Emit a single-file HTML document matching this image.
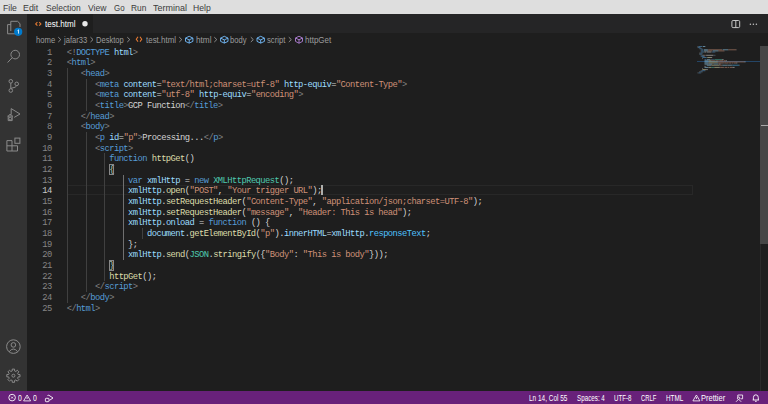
<!DOCTYPE html>
<html><head><meta charset="utf-8">
<style>
*{margin:0;padding:0;box-sizing:border-box}
html,body{width:768px;height:404px;overflow:hidden;background:#1e1e1e;font-family:"Liberation Sans",sans-serif}
.abs{position:absolute}
#menubar{position:absolute;left:0;top:0;width:768px;height:14px;background:#dedede;color:#3c3c3c;font-size:8.4px}
#menubar span{position:absolute;top:1.9px;line-height:10px}
#activity{position:absolute;left:0;top:14px;width:27px;height:377px;background:#333333}
#tabbar{position:absolute;left:27px;top:14px;width:741px;height:19px;background:#252526}
#tab{position:absolute;left:27px;top:14px;width:66px;height:19px;background:#1e1e1e}
#status{position:absolute;left:0;top:391px;width:768px;height:13px;background:#68217a;color:#fff;font-size:7.4px}
#status span{position:absolute;top:2px;line-height:9px}
.ui{position:absolute;white-space:pre;transform-origin:0 0;}
.crumbx{position:absolute;top:35px;line-height:10px;font-size:8px;color:#a9a9a9}
.ln{position:absolute;padding-top:0.9px;height:10.67px;line-height:10.67px;font-family:"Liberation Mono",monospace;font-size:8.8px;letter-spacing:-0.558px;white-space:pre;color:#d4d4d4}
.num{position:absolute;padding-top:0.9px;left:27px;width:24.8px;text-align:right;height:10.67px;line-height:10.67px;font-family:"Liberation Mono",monospace;font-size:8.8px;letter-spacing:-0.558px;color:#858585}
.num.act{color:#c6c6c6}
.g{color:#808080}.b{color:#569cd6}.a{color:#9cdcfe}.s{color:#ce9178}.t{color:#d4d4d4}.f{color:#dcdcaa}.c{color:#4ec9b0}.p{color:#4fc1ff}
.guide{position:absolute;width:1px;background:#404040}
.guide.act{background:#707070}
</style></head><body>
<div id="menubar"></div>
<div id="activity"></div>
<div id="tabbar"></div>
<div id="tab"></div>
<!-- tab content -->
<svg class="abs" style="left:0;top:0" width="768" height="404" viewBox="0 0 768 404">
<g fill="none" stroke="#e37933" stroke-width="1.1">
<path d="M37.4 22.1 L35.7 23.9 L37.4 25.7"/><path d="M39.2 22.1 L40.9 23.9 L39.2 25.7"/>
<path d="M138 36.8 L136.3 39.2 L138 41.6"/><path d="M140 36.8 L141.7 39.2 L140 41.6"/>
</g>
<circle cx="85" cy="23.8" r="2.7" fill="#e8e8e8"/>
<g fill="none" stroke="#9a9a9a" stroke-width="0.9">
<path d="M58.3 37.2 L60.8 39.6 L58.3 42"/>
<path d="M90.5 37.2 L93 39.6 L90.5 42"/>
<path d="M127.3 37.2 L129.8 39.6 L127.3 42"/>
<path d="M179.3 37.2 L181.8 39.6 L179.3 42"/>
<path d="M214.3 37.2 L216.8 39.6 L214.3 42"/>
<path d="M250.8 37.2 L253.3 39.6 L250.8 42"/>
<path d="M288.8 37.2 L291.3 39.6 L288.8 42"/>
</g>
<g fill="none" stroke="#75beff" stroke-width="0.9">
<g transform="translate(189.2 39.6)"><path d="M0 -3.3 L3.7 -1.5 L3.7 1.8 L0 3.5 L-3.7 1.8 L-3.7 -1.5 Z M-3.7 -1.5 L0 0.3 L3.7 -1.5 M0 0.3 L0 3.5"/></g>
<g transform="translate(224.3 39.6)"><path d="M0 -3.3 L3.7 -1.5 L3.7 1.8 L0 3.5 L-3.7 1.8 L-3.7 -1.5 Z M-3.7 -1.5 L0 0.3 L3.7 -1.5 M0 0.3 L0 3.5"/></g>
<g transform="translate(260.7 39.6)"><path d="M0 -3.3 L3.7 -1.5 L3.7 1.8 L0 3.5 L-3.7 1.8 L-3.7 -1.5 Z M-3.7 -1.5 L0 0.3 L3.7 -1.5 M0 0.3 L0 3.5"/></g>
</g>
<g fill="none" stroke="#b180d7" stroke-width="0.9">
<g transform="translate(299 39.6)"><path d="M0 -3.4 L3.5 -1.6 L3.5 1.8 L0 3.6 L-3.5 1.8 L-3.5 -1.6 Z M-3.5 -1.6 L0 0.2 L3.5 -1.6 M0 0.2 L0 3.6"/></g>
</g>
<!-- editor actions -->
<rect x="731.9" y="20.5" width="7.8" height="7.1" rx="1.2" fill="none" stroke="#c5c5c5" stroke-width="1"/>
<line x1="735.8" y1="20.5" x2="735.8" y2="27.6" stroke="#c5c5c5" stroke-width="1"/>
<circle cx="750.4" cy="24.2" r="0.75" fill="#c5c5c5"/><circle cx="753.4" cy="24.2" r="0.75" fill="#c5c5c5"/><circle cx="756.4" cy="24.2" r="0.75" fill="#c5c5c5"/>
<!-- activity icons -->
<g fill="none" stroke="#8a8a8a" stroke-width="1">
<path d="M10.8 24.6 H7.6 V33.8 H15"/>
<path d="M10.8 31 V21.3 H17.6 L20 23.7 V27"/>
<circle cx="15.2" cy="54.6" r="4.3"/>
<path d="M12.2 57.7 L7.6 62.5"/>
<circle cx="10.8" cy="81.3" r="1.8"/><circle cx="16.7" cy="83.9" r="1.8"/><circle cx="10.8" cy="90.5" r="1.8"/>
<path d="M10.8 83.1 V88.7 M16.7 85.7 Q16.5 87.4 10.8 88.4"/>
<path d="M11.2 114.6 V108.6 L20 114 L14.2 117.4"/>
<path d="M7.6 116 H12.8 M8.2 116 V120.6 H12.2 V116"/><circle cx="10.2" cy="118.6" r="1.4"/><path d="M8.6 115.6 L9.4 114.6 H11 L11.8 115.6"/>
<path d="M6.9 140.6 H12 V151 H6.9 Z M6.9 145.8 H17.5 V151 H12"/>
<rect x="14.9" y="138.1" width="5" height="5.2"/>
<circle cx="13.4" cy="346.6" r="6.8"/>
<circle cx="13.4" cy="344.9" r="2.3"/>
<path d="M9.1 351.8 Q13.4 346.2 17.7 351.8"/>
</g>
<g fill="none" stroke="#8a8a8a" stroke-width="1"><path d="M12.21 370.95 L12.24 369.10 L14.56 369.10 L14.59 370.95 L15.92 371.50 L17.24 370.21 L18.89 371.86 L17.60 373.18 L18.15 374.51 L20.00 374.54 L20.00 376.86 L18.15 376.89 L17.60 378.22 L18.89 379.54 L17.24 381.19 L15.92 379.90 L14.59 380.45 L14.56 382.30 L12.24 382.30 L12.21 380.45 L10.88 379.90 L9.56 381.19 L7.91 379.54 L9.20 378.22 L8.65 376.89 L6.80 376.86 L6.80 374.54 L8.65 374.51 L9.20 373.18 L7.91 371.86 L9.56 370.21 L10.88 371.50 Z"/><circle cx="13.4" cy="375.7" r="1.5"/></g>
<!-- badge -->
<circle cx="18.2" cy="31.8" r="4.1" fill="#007acc"/>
<path d="M17.5 30.6 L18.5 29.8 V33.6" stroke="#fff" stroke-width="0.8" fill="none"/>
</svg>
<!-- breadcrumbs -->
<!-- current line -->
<div class="abs" style="left:66.8px;top:184.7px;width:626px;height:10.66px;border:1px solid #282828"></div>
<div class="guide" style="left:66.70px;top:68.04px;height:234.74px"></div>
<div class="guide" style="left:85.59px;top:78.71px;height:32.01px"></div>
<div class="guide" style="left:85.59px;top:132.06px;height:160.05px"></div>
<div class="guide" style="left:104.48px;top:153.40px;height:128.04px"></div>
<div class="guide act" style="left:123.36px;top:174.74px;height:85.36px"></div>
<div class="guide" style="left:142.25px;top:228.09px;height:10.67px"></div>
<div class="num" style="top:46.70px">1</div>
<div class="num" style="top:57.37px">2</div>
<div class="num" style="top:68.04px">3</div>
<div class="num" style="top:78.71px">4</div>
<div class="num" style="top:89.38px">5</div>
<div class="num" style="top:100.05px">6</div>
<div class="num" style="top:110.72px">7</div>
<div class="num" style="top:121.39px">8</div>
<div class="num" style="top:132.06px">9</div>
<div class="num" style="top:142.73px">10</div>
<div class="num" style="top:153.40px">11</div>
<div class="num" style="top:164.07px">12</div>
<div class="num" style="top:174.74px">13</div>
<div class="num act" style="top:185.41px">14</div>
<div class="num" style="top:196.08px">15</div>
<div class="num" style="top:206.75px">16</div>
<div class="num" style="top:217.42px">17</div>
<div class="num" style="top:228.09px">18</div>
<div class="num" style="top:238.76px">19</div>
<div class="num" style="top:249.43px">20</div>
<div class="num" style="top:260.10px">21</div>
<div class="num" style="top:270.77px">22</div>
<div class="num" style="top:281.44px">23</div>
<div class="num" style="top:292.11px">24</div>
<div class="num" style="top:302.78px">25</div>
<div class="ln" style="top:46.70px;left:66.70px"><span class="g">&lt;!</span><span class="b">DOCTYPE</span><span class="t"> </span><span class="a">html</span><span class="g">&gt;</span></div>
<div class="ln" style="top:57.37px;left:66.70px"><span class="g">&lt;</span><span class="b">html</span><span class="g">&gt;</span></div>
<div class="ln" style="top:68.04px;left:80.87px"><span class="g">&lt;</span><span class="b">head</span><span class="g">&gt;</span></div>
<div class="ln" style="top:78.71px;left:95.03px"><span class="g">&lt;</span><span class="b">meta</span><span class="t"> </span><span class="a">content</span><span class="t">=</span><span class="s">"text/html;charset=utf-8"</span><span class="t"> </span><span class="a">http-equiv</span><span class="t">=</span><span class="s">"Content-Type"</span><span class="g">&gt;</span></div>
<div class="ln" style="top:89.38px;left:95.03px"><span class="g">&lt;</span><span class="b">meta</span><span class="t"> </span><span class="a">content</span><span class="t">=</span><span class="s">"utf-8"</span><span class="t"> </span><span class="a">http-equiv</span><span class="t">=</span><span class="s">"encoding"</span><span class="g">&gt;</span></div>
<div class="ln" style="top:100.05px;left:95.03px"><span class="g">&lt;</span><span class="b">title</span><span class="g">&gt;</span><span class="t">GCP Function</span><span class="g">&lt;/</span><span class="b">title</span><span class="g">&gt;</span></div>
<div class="ln" style="top:110.72px;left:80.87px"><span class="g">&lt;/</span><span class="b">head</span><span class="g">&gt;</span></div>
<div class="ln" style="top:121.39px;left:80.87px"><span class="g">&lt;</span><span class="b">body</span><span class="g">&gt;</span></div>
<div class="ln" style="top:132.06px;left:95.03px"><span class="g">&lt;</span><span class="b">p</span><span class="t"> </span><span class="a">id</span><span class="t">=</span><span class="s">"p"</span><span class="g">&gt;</span><span class="t">Processing...</span><span class="g">&lt;/</span><span class="b">p</span><span class="g">&gt;</span></div>
<div class="ln" style="top:142.73px;left:95.03px"><span class="g">&lt;</span><span class="b">script</span><span class="g">&gt;</span></div>
<div class="ln" style="top:153.40px;left:109.20px"><span class="b">function</span><span class="t"> </span><span class="f">httpGet</span><span class="t">()</span></div>
<div class="ln" style="top:164.07px;left:109.20px"><span class="t">{</span></div>
<div class="ln" style="top:174.74px;left:128.09px"><span class="b">var</span><span class="t"> </span><span class="a">xmlHttp</span><span class="t"> = </span><span class="b">new</span><span class="t"> </span><span class="c">XMLHttpRequest</span><span class="t">();</span></div>
<div class="ln" style="top:185.41px;left:128.09px"><span class="a">xmlHttp</span><span class="t">.</span><span class="f">open</span><span class="t">(</span><span class="s">"POST"</span><span class="t">, </span><span class="s">"Your trigger URL"</span><span class="t">);</span></div>
<div class="ln" style="top:196.08px;left:128.09px"><span class="a">xmlHttp</span><span class="t">.</span><span class="f">setRequestHeader</span><span class="t">(</span><span class="s">"Content-Type"</span><span class="t">, </span><span class="s">"application/json;charset=UTF-8"</span><span class="t">);</span></div>
<div class="ln" style="top:206.75px;left:128.09px"><span class="a">xmlHttp</span><span class="t">.</span><span class="f">setRequestHeader</span><span class="t">(</span><span class="s">"message"</span><span class="t">, </span><span class="s">"Header: This is head"</span><span class="t">);</span></div>
<div class="ln" style="top:217.42px;left:128.09px"><span class="a">xmlHttp</span><span class="t">.</span><span class="a">onload</span><span class="t"> = </span><span class="b">function</span><span class="t"> () {</span></div>
<div class="ln" style="top:228.09px;left:146.97px"><span class="a">document</span><span class="t">.</span><span class="f">getElementById</span><span class="t">(</span><span class="s">"p"</span><span class="t">).</span><span class="a">innerHTML</span><span class="t">=</span><span class="a">xmlHttp</span><span class="t">.</span><span class="p">responseText</span><span class="t">;</span></div>
<div class="ln" style="top:238.76px;left:128.09px"><span class="t">};</span></div>
<div class="ln" style="top:249.43px;left:128.09px"><span class="a">xmlHttp</span><span class="t">.</span><span class="f">send</span><span class="t">(</span><span class="c">JSON</span><span class="t">.</span><span class="f">stringify</span><span class="t">({</span><span class="s">"Body"</span><span class="t">: </span><span class="s">"This is body"</span><span class="t">}));</span></div>
<div class="ln" style="top:260.10px;left:109.20px"><span class="t">}</span></div>
<div class="ln" style="top:270.77px;left:109.20px"><span class="f">httpGet</span><span class="t">();</span></div>
<div class="ln" style="top:281.44px;left:95.03px"><span class="g">&lt;/</span><span class="b">script</span><span class="g">&gt;</span></div>
<div class="ln" style="top:292.11px;left:80.87px"><span class="g">&lt;/</span><span class="b">body</span><span class="g">&gt;</span></div>
<div class="ln" style="top:302.78px;left:66.70px"><span class="g">&lt;/</span><span class="b">html</span><span class="g">&gt;</span></div>
<!-- minimap -->
<div class="abs" style="left:697px;top:60.6px;width:63px;height:1.1px;background:#264f78;opacity:0.8"></div>
<svg class="abs" style="left:0;top:0;opacity:0.55" width="768" height="404"><rect x="697.40" y="46.00" width="1.09" height="1" fill="#808080"/><rect x="698.49" y="46.00" width="3.83" height="1" fill="#569cd6"/><rect x="702.87" y="46.00" width="2.19" height="1" fill="#9cdcfe"/><rect x="705.06" y="46.00" width="0.55" height="1" fill="#808080"/><rect x="697.40" y="47.10" width="0.55" height="1" fill="#808080"/><rect x="697.95" y="47.10" width="2.19" height="1" fill="#569cd6"/><rect x="700.13" y="47.10" width="0.55" height="1" fill="#808080"/><rect x="699.04" y="48.20" width="0.55" height="1" fill="#808080"/><rect x="699.59" y="48.20" width="2.19" height="1" fill="#569cd6"/><rect x="701.78" y="48.20" width="0.55" height="1" fill="#808080"/><rect x="700.68" y="49.30" width="0.55" height="1" fill="#808080"/><rect x="701.23" y="49.30" width="2.19" height="1" fill="#569cd6"/><rect x="703.96" y="49.30" width="3.83" height="1" fill="#9cdcfe"/><rect x="707.79" y="49.30" width="0.55" height="1" fill="#d4d4d4"/><rect x="708.34" y="49.30" width="13.68" height="1" fill="#ce9178"/><rect x="722.56" y="49.30" width="5.47" height="1" fill="#9cdcfe"/><rect x="728.03" y="49.30" width="0.55" height="1" fill="#d4d4d4"/><rect x="728.58" y="49.30" width="7.66" height="1" fill="#ce9178"/><rect x="736.24" y="49.30" width="0.55" height="1" fill="#808080"/><rect x="700.68" y="50.40" width="0.55" height="1" fill="#808080"/><rect x="701.23" y="50.40" width="2.19" height="1" fill="#569cd6"/><rect x="703.96" y="50.40" width="3.83" height="1" fill="#9cdcfe"/><rect x="707.79" y="50.40" width="0.55" height="1" fill="#d4d4d4"/><rect x="708.34" y="50.40" width="3.83" height="1" fill="#ce9178"/><rect x="712.72" y="50.40" width="5.47" height="1" fill="#9cdcfe"/><rect x="718.19" y="50.40" width="0.55" height="1" fill="#d4d4d4"/><rect x="718.73" y="50.40" width="5.47" height="1" fill="#ce9178"/><rect x="724.20" y="50.40" width="0.55" height="1" fill="#808080"/><rect x="700.68" y="51.50" width="0.55" height="1" fill="#808080"/><rect x="701.23" y="51.50" width="2.74" height="1" fill="#569cd6"/><rect x="703.96" y="51.50" width="0.55" height="1" fill="#808080"/><rect x="704.51" y="51.50" width="1.64" height="1" fill="#d4d4d4"/><rect x="706.70" y="51.50" width="4.38" height="1" fill="#d4d4d4"/><rect x="711.07" y="51.50" width="1.09" height="1" fill="#808080"/><rect x="712.17" y="51.50" width="2.74" height="1" fill="#569cd6"/><rect x="714.90" y="51.50" width="0.55" height="1" fill="#808080"/><rect x="699.04" y="52.60" width="1.09" height="1" fill="#808080"/><rect x="700.13" y="52.60" width="2.19" height="1" fill="#569cd6"/><rect x="702.32" y="52.60" width="0.55" height="1" fill="#808080"/><rect x="699.04" y="53.70" width="0.55" height="1" fill="#808080"/><rect x="699.59" y="53.70" width="2.19" height="1" fill="#569cd6"/><rect x="701.78" y="53.70" width="0.55" height="1" fill="#808080"/><rect x="700.68" y="54.80" width="0.55" height="1" fill="#808080"/><rect x="701.23" y="54.80" width="0.55" height="1" fill="#569cd6"/><rect x="702.32" y="54.80" width="1.09" height="1" fill="#9cdcfe"/><rect x="703.42" y="54.80" width="0.55" height="1" fill="#d4d4d4"/><rect x="703.96" y="54.80" width="1.64" height="1" fill="#ce9178"/><rect x="705.61" y="54.80" width="0.55" height="1" fill="#808080"/><rect x="706.15" y="54.80" width="7.11" height="1" fill="#d4d4d4"/><rect x="713.26" y="54.80" width="1.09" height="1" fill="#808080"/><rect x="714.36" y="54.80" width="0.55" height="1" fill="#569cd6"/><rect x="714.90" y="54.80" width="0.55" height="1" fill="#808080"/><rect x="700.68" y="55.90" width="0.55" height="1" fill="#808080"/><rect x="701.23" y="55.90" width="3.28" height="1" fill="#569cd6"/><rect x="704.51" y="55.90" width="0.55" height="1" fill="#808080"/><rect x="702.32" y="57.00" width="4.38" height="1" fill="#569cd6"/><rect x="707.25" y="57.00" width="3.83" height="1" fill="#dcdcaa"/><rect x="711.07" y="57.00" width="1.09" height="1" fill="#d4d4d4"/><rect x="702.32" y="58.10" width="0.55" height="1" fill="#d4d4d4"/><rect x="704.51" y="59.20" width="1.64" height="1" fill="#569cd6"/><rect x="706.70" y="59.20" width="3.83" height="1" fill="#9cdcfe"/><rect x="711.07" y="59.20" width="0.55" height="1" fill="#d4d4d4"/><rect x="712.17" y="59.20" width="1.64" height="1" fill="#569cd6"/><rect x="714.36" y="59.20" width="7.66" height="1" fill="#4ec9b0"/><rect x="722.01" y="59.20" width="1.64" height="1" fill="#d4d4d4"/><rect x="704.51" y="60.30" width="3.83" height="1" fill="#9cdcfe"/><rect x="708.34" y="60.30" width="0.55" height="1" fill="#d4d4d4"/><rect x="708.89" y="60.30" width="2.19" height="1" fill="#dcdcaa"/><rect x="711.07" y="60.30" width="0.55" height="1" fill="#d4d4d4"/><rect x="711.62" y="60.30" width="3.28" height="1" fill="#ce9178"/><rect x="714.90" y="60.30" width="0.55" height="1" fill="#d4d4d4"/><rect x="716.00" y="60.30" width="2.74" height="1" fill="#ce9178"/><rect x="719.28" y="60.30" width="3.83" height="1" fill="#ce9178"/><rect x="723.66" y="60.30" width="2.19" height="1" fill="#ce9178"/><rect x="725.84" y="60.30" width="1.09" height="1" fill="#d4d4d4"/><rect x="704.51" y="61.40" width="3.83" height="1" fill="#9cdcfe"/><rect x="708.34" y="61.40" width="0.55" height="1" fill="#d4d4d4"/><rect x="708.89" y="61.40" width="8.75" height="1" fill="#dcdcaa"/><rect x="717.64" y="61.40" width="0.55" height="1" fill="#d4d4d4"/><rect x="718.19" y="61.40" width="7.66" height="1" fill="#ce9178"/><rect x="725.84" y="61.40" width="0.55" height="1" fill="#d4d4d4"/><rect x="726.94" y="61.40" width="17.50" height="1" fill="#ce9178"/><rect x="744.44" y="61.40" width="1.09" height="1" fill="#d4d4d4"/><rect x="704.51" y="62.50" width="3.83" height="1" fill="#9cdcfe"/><rect x="708.34" y="62.50" width="0.55" height="1" fill="#d4d4d4"/><rect x="708.89" y="62.50" width="8.75" height="1" fill="#dcdcaa"/><rect x="717.64" y="62.50" width="0.55" height="1" fill="#d4d4d4"/><rect x="718.19" y="62.50" width="4.92" height="1" fill="#ce9178"/><rect x="723.11" y="62.50" width="0.55" height="1" fill="#d4d4d4"/><rect x="724.20" y="62.50" width="4.38" height="1" fill="#ce9178"/><rect x="729.13" y="62.50" width="2.19" height="1" fill="#ce9178"/><rect x="731.86" y="62.50" width="1.09" height="1" fill="#ce9178"/><rect x="733.50" y="62.50" width="2.74" height="1" fill="#ce9178"/><rect x="736.24" y="62.50" width="1.09" height="1" fill="#d4d4d4"/><rect x="704.51" y="63.60" width="3.83" height="1" fill="#9cdcfe"/><rect x="708.34" y="63.60" width="0.55" height="1" fill="#d4d4d4"/><rect x="708.89" y="63.60" width="3.28" height="1" fill="#9cdcfe"/><rect x="712.72" y="63.60" width="0.55" height="1" fill="#d4d4d4"/><rect x="713.81" y="63.60" width="4.38" height="1" fill="#569cd6"/><rect x="718.73" y="63.60" width="1.09" height="1" fill="#d4d4d4"/><rect x="720.37" y="63.60" width="0.55" height="1" fill="#d4d4d4"/><rect x="706.70" y="64.70" width="4.38" height="1" fill="#9cdcfe"/><rect x="711.07" y="64.70" width="0.55" height="1" fill="#d4d4d4"/><rect x="711.62" y="64.70" width="7.66" height="1" fill="#dcdcaa"/><rect x="719.28" y="64.70" width="0.55" height="1" fill="#d4d4d4"/><rect x="719.83" y="64.70" width="1.64" height="1" fill="#ce9178"/><rect x="721.47" y="64.70" width="1.09" height="1" fill="#d4d4d4"/><rect x="722.56" y="64.70" width="4.92" height="1" fill="#9cdcfe"/><rect x="727.49" y="64.70" width="0.55" height="1" fill="#d4d4d4"/><rect x="728.03" y="64.70" width="3.83" height="1" fill="#9cdcfe"/><rect x="731.86" y="64.70" width="0.55" height="1" fill="#d4d4d4"/><rect x="732.41" y="64.70" width="6.56" height="1" fill="#4fc1ff"/><rect x="738.97" y="64.70" width="0.55" height="1" fill="#d4d4d4"/><rect x="704.51" y="65.80" width="1.09" height="1" fill="#d4d4d4"/><rect x="704.51" y="66.90" width="3.83" height="1" fill="#9cdcfe"/><rect x="708.34" y="66.90" width="0.55" height="1" fill="#d4d4d4"/><rect x="708.89" y="66.90" width="2.19" height="1" fill="#dcdcaa"/><rect x="711.07" y="66.90" width="0.55" height="1" fill="#d4d4d4"/><rect x="711.62" y="66.90" width="2.19" height="1" fill="#4ec9b0"/><rect x="713.81" y="66.90" width="0.55" height="1" fill="#d4d4d4"/><rect x="714.36" y="66.90" width="4.92" height="1" fill="#dcdcaa"/><rect x="719.28" y="66.90" width="1.09" height="1" fill="#d4d4d4"/><rect x="720.37" y="66.90" width="3.28" height="1" fill="#ce9178"/><rect x="723.66" y="66.90" width="0.55" height="1" fill="#d4d4d4"/><rect x="724.75" y="66.90" width="2.74" height="1" fill="#ce9178"/><rect x="728.03" y="66.90" width="1.09" height="1" fill="#ce9178"/><rect x="729.67" y="66.90" width="2.74" height="1" fill="#ce9178"/><rect x="732.41" y="66.90" width="2.19" height="1" fill="#d4d4d4"/><rect x="702.32" y="68.00" width="0.55" height="1" fill="#d4d4d4"/><rect x="702.32" y="69.10" width="3.83" height="1" fill="#dcdcaa"/><rect x="706.15" y="69.10" width="1.64" height="1" fill="#d4d4d4"/><rect x="700.68" y="70.20" width="1.09" height="1" fill="#808080"/><rect x="701.78" y="70.20" width="3.28" height="1" fill="#569cd6"/><rect x="705.06" y="70.20" width="0.55" height="1" fill="#808080"/><rect x="699.04" y="71.30" width="1.09" height="1" fill="#808080"/><rect x="700.13" y="71.30" width="2.19" height="1" fill="#569cd6"/><rect x="702.32" y="71.30" width="0.55" height="1" fill="#808080"/><rect x="697.40" y="72.40" width="1.09" height="1" fill="#808080"/><rect x="698.49" y="72.40" width="2.19" height="1" fill="#569cd6"/><rect x="700.68" y="72.40" width="0.55" height="1" fill="#808080"/></svg>
<!-- bracket match -->
<div class="abs" style="left:109px;top:163.6px;width:5px;height:11.2px;border:1px solid #888;background:rgba(0,100,0,0.1)"></div>
<div class="abs" style="left:109px;top:259.6px;width:5px;height:11.2px;border:1px solid #888;background:rgba(0,100,0,0.1)"></div>
<!-- cursor -->
<div class="abs" style="left:321.4px;top:184.8px;width:1.6px;height:10.6px;background:#aeafad"></div>
<!-- scrollbar -->
<div class="abs" style="left:760px;top:46px;width:1px;height:345px;background:#2a2a2a"></div>
<div class="abs" style="left:760px;top:46px;width:8px;height:198px;background:#464646"></div>
<div class="abs" style="left:760.5px;top:124.9px;width:7.5px;height:1.2px;background:#a8a8a8"></div>
<div id="status">
<svg class="abs" style="left:0;top:0" width="768" height="13">
<g fill="none" stroke="#fff" stroke-width="0.9">
<circle cx="12.1" cy="6.6" r="3.3"/><path d="M11.2 5.7 L13 7.5 M13 5.7 L11.2 7.5" stroke-width="0.8"/>
<path d="M27.1 4 L30.6 9.9 H23.6 Z M27.1 6 V8" stroke-width="0.8"/>
<path d="M696.4 4 L699.9 9.9 H692.9 Z M696.4 6 V8" stroke-width="0.8"/>
<path d="M47.5 5 L48.5 4 L53 7 L49.5 9.3"/>
<rect x="45.4" y="7.3" width="3.6" height="3.4" rx="0.8"/>
<path d="M737.8 6.6 V4 H742.6 V7.8 H740.6" stroke-width="0.8"/><circle cx="738.6" cy="7.2" r="1.2" stroke-width="0.8"/><path d="M736 10.8 L738.2 8.6 M739 8.6 L741.2 10.8" stroke-width="0.8"/>
<path d="M752.7 9 H759 M753.4 9 V6.6 Q753.4 3.8 755.85 3.8 Q758.3 3.8 758.3 6.6 V9 M755 10.3 H756.7"/>
</g>
</svg>
</div>
<div class="ui" style="left:3.21px;top:4.10px;font-size:9.0px;line-height:9.0px;color:#3c3c3c;transform:scaleX(0.958);">File</div>
<div class="ui" style="left:23.19px;top:4.10px;font-size:9.0px;line-height:9.0px;color:#3c3c3c;transform:scaleX(0.985);">Edit</div>
<div class="ui" style="left:45.72px;top:4.10px;font-size:9.0px;line-height:9.0px;color:#3c3c3c;transform:scaleX(0.938);">Selection</div>
<div class="ui" style="left:87.96px;top:4.10px;font-size:9.0px;line-height:9.0px;color:#3c3c3c;transform:scaleX(0.953);">View</div>
<div class="ui" style="left:113.65px;top:4.10px;font-size:9.0px;line-height:9.0px;color:#3c3c3c;transform:scaleX(0.879);">Go</div>
<div class="ui" style="left:130.88px;top:4.10px;font-size:9.0px;line-height:9.0px;color:#3c3c3c;transform:scaleX(0.930);">Run</div>
<div class="ui" style="left:153.12px;top:4.10px;font-size:9.0px;line-height:9.0px;color:#3c3c3c;transform:scaleX(0.997);">Terminal</div>
<div class="ui" style="left:193.36px;top:4.10px;font-size:9.0px;line-height:9.0px;color:#3c3c3c;transform:scaleX(0.956);">Help</div>
<div class="ui" style="left:45.08px;top:20.11px;font-size:8.4px;line-height:8.4px;color:#ffffff;transform:scaleX(0.963);">test.html</div>
<div class="ui" style="left:35.66px;top:36.24px;font-size:8.6px;line-height:8.6px;color:#9c9c9c;transform:scaleX(0.897);">home</div>
<div class="ui" style="left:64.09px;top:36.24px;font-size:8.6px;line-height:8.6px;color:#9c9c9c;transform:scaleX(0.884);">jafar33</div>
<div class="ui" style="left:96.10px;top:36.24px;font-size:8.6px;line-height:8.6px;color:#9c9c9c;transform:scaleX(0.877);">Desktop</div>
<div class="ui" style="left:145.98px;top:36.24px;font-size:8.6px;line-height:8.6px;color:#9c9c9c;transform:scaleX(0.925);">test.html</div>
<div class="ui" style="left:195.72px;top:36.24px;font-size:8.6px;line-height:8.6px;color:#9c9c9c;transform:scaleX(0.957);">html</div>
<div class="ui" style="left:230.41px;top:36.24px;font-size:8.6px;line-height:8.6px;color:#9c9c9c;transform:scaleX(0.884);">body</div>
<div class="ui" style="left:266.77px;top:36.24px;font-size:8.6px;line-height:8.6px;color:#9c9c9c;transform:scaleX(0.891);">script</div>
<div class="ui" style="left:304.54px;top:36.24px;font-size:8.6px;line-height:8.6px;color:#9c9c9c;transform:scaleX(0.930);">httpGet</div>
<div class="ui" style="left:18.03px;top:393.59px;font-size:8.3px;line-height:8.3px;color:#ffffff;transform:scaleX(0.828);">0</div>
<div class="ui" style="left:32.82px;top:393.59px;font-size:8.3px;line-height:8.3px;color:#ffffff;transform:scaleX(0.828);">0</div>
<div class="ui" style="left:529.18px;top:393.59px;font-size:8.3px;line-height:8.3px;color:#ffffff;transform:scaleX(0.779);">Ln 14, Col 55</div>
<div class="ui" style="left:577.02px;top:393.59px;font-size:8.3px;line-height:8.3px;color:#ffffff;transform:scaleX(0.755);">Spaces: 4</div>
<div class="ui" style="left:614.34px;top:393.59px;font-size:8.3px;line-height:8.3px;color:#ffffff;transform:scaleX(0.737);">UTF-8</div>
<div class="ui" style="left:641.31px;top:393.59px;font-size:8.3px;line-height:8.3px;color:#ffffff;transform:scaleX(0.708);">CRLF</div>
<div class="ui" style="left:665.59px;top:393.59px;font-size:8.3px;line-height:8.3px;color:#ffffff;transform:scaleX(0.766);">HTML</div>
<div class="ui" style="left:701.40px;top:393.59px;font-size:8.3px;line-height:8.3px;color:#ffffff;transform:scaleX(0.906);">Prettier</div>
</body></html>
